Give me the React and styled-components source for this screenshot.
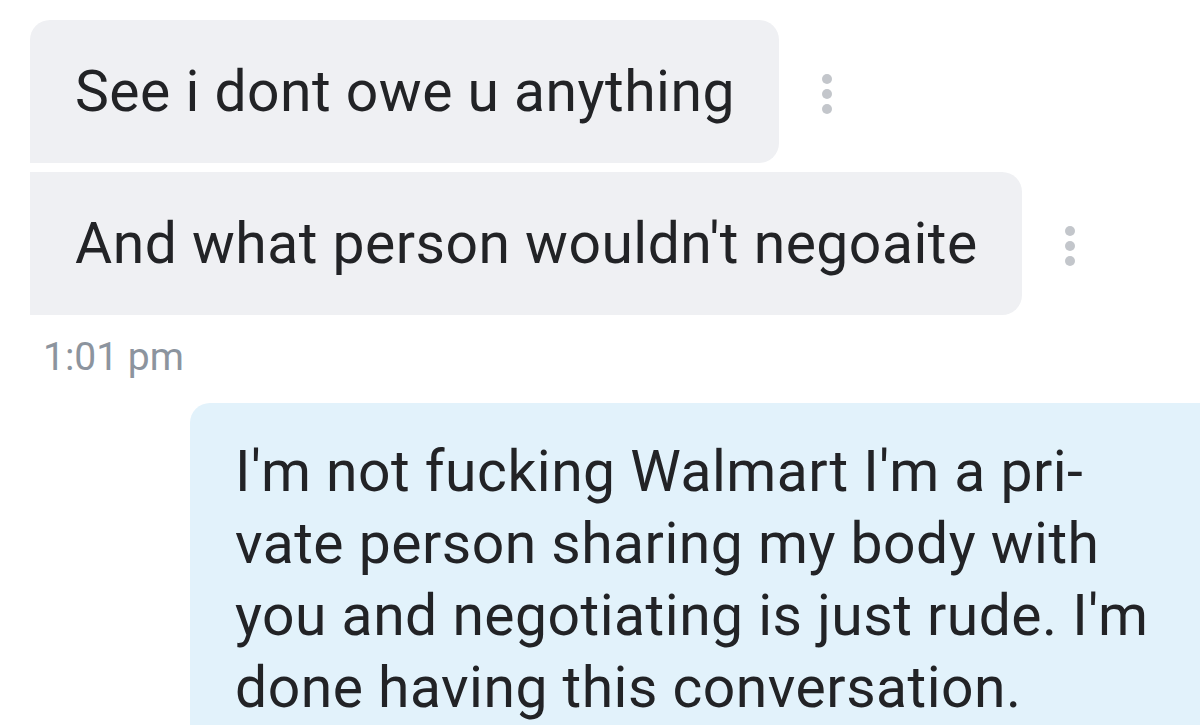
import React from "react";
import styled, { createGlobalStyle } from "styled-components";

const GlobalStyle = createGlobalStyle`
  html, body {
    margin: 0;
    padding: 0;
    background: #ffffff;
    overflow: hidden;
  }
  body {
    font-family: Roboto, "Noto Sans", sans-serif;
    -webkit-font-smoothing: antialiased;
  }
`;

const Thread = styled.div`
  width: 1200px;
  height: 725px;
  overflow: hidden;
  background: #ffffff;
  padding-top: 20px;
  box-sizing: border-box;
  display: flex;
  flex-direction: column;
`;

const Group = styled.div`
  display: flex;
  flex-direction: column;
  gap: 9px;
  padding-left: 30px;
`;

const Row = styled.div`
  display: flex;
  align-items: center;
`;

const Bubble = styled.div`
  background: #eff0f3;
  color: #222326;
  font-size: 57px;
  letter-spacing: 0.5px;
  line-height: 64px;
  height: 143px;
  box-sizing: border-box;
  padding: 0 44px 0 45px;
  display: flex;
  align-items: center;
  white-space: nowrap;
  border-radius: ${(p) => (p.$first ? "20px 20px 20px 0" : "0 20px 20px 0")};
`;

const Menu = styled.div`
  display: flex;
  flex-direction: column;
  gap: 5px;
  margin-left: 43px;
  padding-top: 4px;
  span {
    width: 10px;
    height: 10px;
    border-radius: 50%;
    background: #c3c6cb;
  }
`;

const Time = styled.div`
  color: #8c949e;
  font-size: 39px;
  line-height: 44px;
  margin: 20px 0 0 43px;
`;

const OutRow = styled.div`
  display: flex;
  margin-top: 24px;
  padding-left: 190px;
`;

const OutBubble = styled.div`
  flex: 1;
  background: #e2f2fb;
  color: #222326;
  font-size: 57px;
  letter-spacing: 0.5px;
  line-height: 72px;
  padding: 33px 0 60px 45px;
  border-radius: 20px 0 0 0;
  white-space: nowrap;
  span {
    display: block;
  }
`;

const Dots = () => (
  <Menu>
    <span />
    <span />
    <span />
  </Menu>
);

export default function App() {
  return (
    <>
      <GlobalStyle />
      <Thread>
        <Group>
          <Row>
            <Bubble $first>See i dont owe u anything</Bubble>
            <Dots />
          </Row>
          <Row>
            <Bubble>And what person wouldn't negoaite</Bubble>
            <Dots />
          </Row>
        </Group>
        <Time>1:01 pm</Time>
        <OutRow>
          <OutBubble>
            <span>I'm not fucking Walmart I'm a pri-</span>
            <span>vate person sharing my body with</span>
            <span>you and negotiating is just rude. I'm</span>
            <span>done having this conversation.</span>
          </OutBubble>
        </OutRow>
      </Thread>
    </>
  );
}
